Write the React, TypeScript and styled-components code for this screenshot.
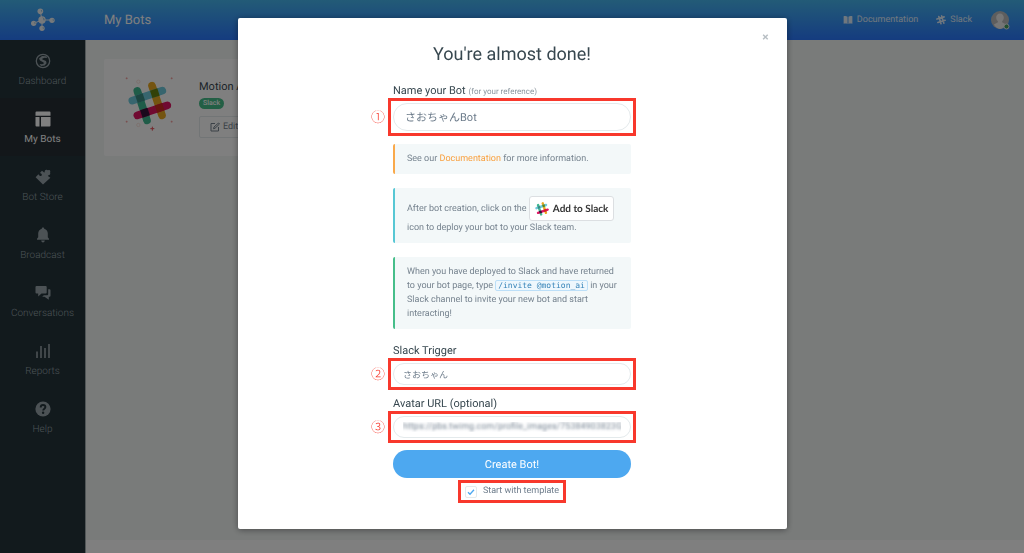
import React from "react";
import styled, { createGlobalStyle, css } from "styled-components";

const GlobalStyle = createGlobalStyle`
  *, *::before, *::after { box-sizing: border-box; }
  body {
    margin: 0;
    font-family: Roboto, "Noto Sans CJK JP", sans-serif;
    font-size: 9px;
    color: #6c7b8a;
    background: #f2f6f5;
    text-rendering: geometricPrecision;
  }
  button, input { font-family: inherit; text-rendering: inherit; }
`;

/* ---------- page shell ---------- */

const Shell = styled.div`
  min-height: 100vh;
  display: flex;
  flex-direction: column;
`;

const TopBar = styled.header`
  height: 40px;
  display: flex;
  align-items: center;
  padding-right: 14px;
  background: linear-gradient(#46b6ee, #2a78ff);
`;

const Brand = styled.a`
  width: 86px;
  display: flex;
  justify-content: center;
`;

const PageTitle = styled.h1`
  flex: 1;
  margin: 0;
  padding-left: 18px;
  font-size: 13px;
  font-weight: 400;
  color: #fff;
`;

const TopNav = styled.nav`
  display: flex;
  align-items: center;
  gap: 18px;
`;

const TopLink = styled.a`
  display: flex;
  align-items: center;
  gap: 4px;
  font-size: 9px;
  line-height: 14px;
  font-weight: 400;
  color: #fff;
  opacity: 0.85;
  text-decoration: none;
`;

const Body = styled.div`
  flex: 1;
  display: flex;
`;

const Sidebar = styled.nav`
  width: 86px;
  background: #24343b;
  border-right: 1px solid #a4aeb0;
`;

const SideLink = styled.a<{ $active?: boolean }>`
  height: 58px;
  display: flex;
  flex-direction: column;
  align-items: center;
  justify-content: center;
  gap: 6px;
  padding-top: 3px;
  font-size: 10px;
  line-height: 14px;
  font-weight: ${(p) => (p.$active ? 400 : 300)};
  color: ${(p) => (p.$active ? "#fff" : "#98a4aa")};
  background: ${(p) => (p.$active ? "#262e34" : "transparent")};
  text-decoration: none;
`;

const Content = styled.div`
  flex: 1;
  display: flex;
  flex-direction: column;
`;

const Main = styled.main`
  flex: 1;
  padding: 19px 18px;
`;

const Footer = styled.footer`
  height: 13px;
  background: #fff;
`;

const BotCard = styled.article`
  width: 100%;
  max-width: 280px;
  height: 97px;
  display: flex;
  gap: 26px;
  padding: 18px 21px;
  border-radius: 2px;
  background: #fff;
`;

const BotInfo = styled.div`
  display: flex;
  flex-direction: column;
  align-items: flex-start;
  padding-top: 3px;
`;

const BotName = styled.h2`
  margin: 0;
  font-size: 11px;
  line-height: 14px;
  font-weight: 400;
  color: #37474f;
`;

const Badge = styled.span`
  margin: 4px 0 7px;
  padding: 0 4px;
  border-radius: 6px;
  font-size: 7px;
  line-height: 11px;
  font-weight: 500;
  color: #fff;
  background: #46be8a;
`;

const EditButton = styled.button`
  height: 22px;
  width: 76px;
  display: flex;
  align-items: center;
  gap: 3px;
  padding: 0 10px;
  border: 1px solid #e4eaec;
  border-radius: 2px;
  background: #fff;
  color: #76838f;
  font-size: 9px;
`;

/* ---------- dialog ---------- */

const Backdrop = styled.div`
  position: fixed;
  inset: 0;
  padding: 18px 16px;
  overflow: auto;
  background: rgba(0, 0, 0, 0.5);
`;

const Dialog = styled.section`
  position: relative;
  width: 100%;
  max-width: 549px;
  margin: 0 auto;
  padding: 25px 16px 31px;
  border-radius: 2px;
  background: #fff;
  box-shadow: 0 1px 6px rgba(0, 0, 0, 0.4);
`;

const CloseButton = styled.button`
  position: absolute;
  top: 13px;
  right: 18px;
  padding: 0;
  border: 0;
  background: none;
  font-size: 12px;
  line-height: 12px;
  font-weight: 700;
  color: #b8bfc4;
`;

const DialogTitle = styled.h2`
  margin: 0 0 16px;
  text-align: center;
  font-size: 18px;
  line-height: 24px;
  font-weight: 400;
  color: #37474f;
`;

const Form = styled.form`
  max-width: 238px;
  margin: 0 auto;
`;

const Label = styled.label`
  display: block;
  margin-bottom: 4px;
  font-size: 11px;
  line-height: 16px;
  color: #37474f;
`;

const Hint = styled.small`
  font-size: 8px;
  line-height: 8px;
  font-weight: 400;
  color: #8b969f;
`;

const marked = css`
  outline: 3px solid #f8382c;
  outline-offset: 2px;
`;

const Field = styled.div<{ $gap: number }>`
  position: relative;
  margin-bottom: ${(p) => p.$gap}px;
  ${marked}
`;

const Step = styled.span`
  position: absolute;
  right: 100%;
  top: 50%;
  transform: translateY(-50%);
  margin-right: 8px;
  font-family: "Noto Sans CJK JP", sans-serif;
  font-size: 14px;
  line-height: 16px;
  font-weight: 300;
  color: #f8382c;
`;

const TextInput = styled.input<{ $large?: boolean; $obscured?: boolean }>`
  display: block;
  width: 100%;
  height: ${(p) => (p.$large ? 28 : 22)}px;
  padding: 0 ${(p) => (p.$large ? 11 : 9)}px;
  border: 1px solid #e4eaec;
  border-radius: 14px;
  outline: 0;
  background: #fff;
  font-size: ${(p) => (p.$large ? 11 : 9)}px;
  color: #6c7b8a;
  ${(p) =>
    p.$obscured &&
    css`
      color: transparent;
      text-shadow: 0 0 3px #6c7b8a;
    `}
`;

const Note = styled.p<{ $accent: string }>`
  margin: 0 0 14px;
  padding: 8px 12px;
  border-left: 2px solid ${(p) => p.$accent};
  border-radius: 2px;
  background: #f3f8f9;
  font-size: 9px;
  line-height: 14px;
  font-weight: 400;
  color: #76838f;
`;

const NoteLink = styled.a`
  color: #f9a03f;
  text-decoration: none;
`;

const Code = styled.code`
  padding: 0 2px;
  border: 1px solid #bcdff8;
  border-radius: 2px;
  background: #eef7fd;
  font-family: "DejaVu Sans Mono", monospace;
  font-size: 8px;
  line-height: 11px;
  white-space: nowrap;
  color: #3583b8;
`;

const AddToSlack = styled.button`
  height: 25px;
  display: inline-flex;
  align-items: center;
  gap: 4px;
  padding: 0 5px;
  border: 1px solid #dcdfe2;
  border-radius: 3px;
  background: #fff;
  vertical-align: middle;
  white-space: nowrap;
  font-family: Lato, sans-serif;
  font-size: 10px;
  font-weight: 700;
  color: #333;
`;

const SubmitButton = styled.button`
  display: block;
  width: 100%;
  height: 28px;
  border: 0;
  border-radius: 14px;
  background: #4da8f0;
  font-size: 11px;
  color: #fff;
`;

const TemplateRow = styled.div`
  display: flex;
  justify-content: center;
  margin-top: 7px;
`;

const TemplateOption = styled.label`
  display: flex;
  align-items: center;
  gap: 6px;
  padding: 0 2px;
  font-size: 9px;
  line-height: 13px;
  ${marked}
`;

const Checkbox = styled.input`
  appearance: none;
  width: 12px;
  height: 12px;
  margin: 0;
  border: 1px solid #e4eaec;
  border-radius: 2px;
  background: #fff;
  &:checked {
    background: center / 8px 8px no-repeat
      url("data:image/svg+xml,%3Csvg xmlns='http://www.w3.org/2000/svg' viewBox='0 0 8 8'%3E%3Cpath d='M1 4.2l2 2L7 1.8' fill='none' stroke='%234da8f0' stroke-width='1.3'/%3E%3C/svg%3E");
  }
`;

/* ---------- drawings ---------- */

const Molecule = () => (
  <svg width="24" height="24" viewBox="0 0 72 72" fill="#eef3f6" stroke="#eef3f6" aria-hidden="true">
    <path d="M33 36 28 10M33 36 63 36M33 36 8 46M33 36 33 61" strokeWidth="3" fill="none" />
    <g stroke="none">
      <circle cx="33" cy="36" r="11" />
      <circle cx="28" cy="10" r="8.5" />
      <circle cx="63" cy="37" r="8" />
      <circle cx="8" cy="46" r="8" />
      <circle cx="33" cy="61" r="8" />
    </g>
    <path d="M36 29a8 8 0 0 1 3 8M30 6a5 5 0 0 1 2 5M66 34a4 4 0 0 1 1 4M11 43a4 4 0 0 1 1 4M36 58a4 4 0 0 1 1 4" fill="none" stroke="#6fa9cf" strokeWidth="2.5" />
  </svg>
);

const HashMark = ({ size }: { size: number }) => (
  <svg width={size} height={size} viewBox="380 243 132 132" aria-hidden="true">
    <g fill="none" strokeWidth="23" strokeLinecap="round">
      <path d="M409 272 438 360" stroke="#3eb991" />
      <path d="M453 256 483 345" stroke="#e9a820" />
      <path d="M394 301 484 271" stroke="#6ecadc" />
      <path d="M409 345 499 315" stroke="#e01563" />
    </g>
    <g fill="none" strokeWidth="23">
      <path d="M406.500 297 428.500 289.500" stroke="#3a8c82" />
      <path d="M450.500 282 472.500 275" stroke="#65830f" />
      <path d="M421 341 443 333.500" stroke="#361238" />
      <path d="M465 326.500 487 319" stroke="#cf2a20" />
    </g>
  </svg>
);

const BotPicture = () => (
  <svg width="48" height="54" viewBox="372 230 144 162" aria-hidden="true">
    <svg x="380" y="243" width="132" height="132" viewBox="0 0 132 132">
      <HashMark size={132} />
    </svg>
    <g stroke="#f08a8a" strokeWidth="2" fill="none">
      <path d="M374 234h6M377 231v6M509 234h6M512 231v6M374 364h6M377 361v6M509 364h6M512 361v6" />
      <path d="M448 385h12M454 379v12" stroke="#e8505a" strokeWidth="3" />
      <circle cx="412" cy="244" r="5" stroke="#f6d5cd" />
      <circle cx="412" cy="374" r="5" stroke="#f6d5cd" />
    </g>
  </svg>
);

const Icon = ({ children, size = 16 }: { children: React.ReactNode; size?: number }) => (
  <svg width={size} height={size} viewBox="0 0 16 16" fill="currentColor" aria-hidden="true">
    {children}
  </svg>
);

const GlobeIcon = () => (
  <Icon>
    <circle cx="8" cy="8" r="6.700" fill="none" stroke="currentColor" strokeWidth="1.300" />
    <path d="M4 5.500 7 3l4.500.2.500 1.800-2.500-.3-2.300 1 .2.900 3.600 1.400.6 2.200-2 2.300-3.600.6-1.500-2 2.600.1 1.800-.8-.3-1L5 7.500z" />
  </Icon>
);
const LayoutIcon = () => (
  <Icon>
    <path d="M1.500.5h13a1 1 0 0 1 1 1v3.200H.5V1.500a1 1 0 0 1 1-1zM.5 6h4v9.500h-3a1 1 0 0 1-1-1zM6 6h9.500v8.500a1 1 0 0 1-1 1H6z" />
  </Icon>
);
const PuzzleIcon = () => (
  <Icon>
    <path d="M8 15.500.6 8.300l2.600-2.700c.5-.4 1 0 1.100.6.300 1.100 1.700 1.200 2.300.4.600-.9.200-1.900-.8-2.200-.6-.2-.7-.7-.3-1.100L7 1.800l1.800 1.500c.5.400 1 .1.900-.5C9.500 1.300 11 .3 12.200 1c.6.300.9 0 1.400-.1.800-.1 1.600.4 1.700 1.300.1.600-.3 1-.2 1.600.6 1.200-.2 2.300-1.500 2.400-.7.100-.8.500-.4 1l2.200 1.500z" />
  </Icon>
);
const BellIcon = () => (
  <Icon>
    <path d="M8 .5c.8 0 1.200.5 1.200 1.200 2.300.6 3.600 2.400 3.600 4.900v3.600l1.200 1.600v1H2v-1l1.200-1.600V6.600c0-2.500 1.300-4.300 3.600-4.900C6.800 1 7.200.5 8 .5zM6.200 13.600h3.600c0 1.100-.8 1.900-1.800 1.900s-1.800-.8-1.800-1.900z" />
  </Icon>
);
const ChatIcon = () => (
  <Icon>
    <path d="M1.500 1h9.200a1 1 0 0 1 1 1v5.600a1 1 0 0 1-1 1H6.500L3.200 11.500V8.600H1.500a1 1 0 0 1-1-1V2a1 1 0 0 1 1-1z" />
    <path d="M13.200 4.200h1.300a1 1 0 0 1 1 1v5.600a1 1 0 0 1-1 1h-.7v3L9.500 11.800H7.200l1.600-1.600h3.400a1 1 0 0 0 1-1z" />
  </Icon>
);
const BarsIcon = () => (
  <Icon>
    <path d="M1.200 8.500h1.600v6.500H1.200zM5.200 3h1.600v12H5.200zM9.200 5h1.600v10H9.200zM13.200 1h1.600v14h-1.600z" />
  </Icon>
);
const HelpIcon = () => (
  <Icon>
    <circle cx="8" cy="8" r="7.600" />
    <path d="M5.700 6.400C5.700 4.900 6.600 4 8 4s2.400.9 2.400 2.100C10.400 7.700 8.200 7.700 8.200 9.600" fill="none" stroke="#24343b" strokeWidth="1.900" />
    <circle cx="8.100" cy="11.700" r="1.200" fill="#24343b" />
  </Icon>
);
const BookIcon = () => (
  <Icon size={10}>
    <path d="M1 2c2.400-.6 4.600-.3 6.300.6v11.600C5.600 13.400 3.400 13.200 1 13.800zM15 2c-2.400-.6-4.600-.3-6.300.6v11.600c1.700-.8 3.900-1 6.300-.4z" />
  </Icon>
);
const HashIcon = () => (
  <Icon size={10}>
    <path d="M4.500 2.500 8 14M9 1.500l3.500 11.500M1.500 6.500 13 3M3 12l11.500-3.500" fill="none" stroke="currentColor" strokeWidth="2.600" strokeLinecap="round" />
  </Icon>
);
const EditIcon = () => (
  <svg width="10" height="10" viewBox="0 0 20 20" fill="none" stroke="currentColor" strokeWidth="2" aria-hidden="true">
    <path d="M10 3H2v15h15v-8" />
    <path d="M7 13.500 8 10l9-8 2 2-9 8.500z" />
  </svg>
);
const Avatar = () => (
  <svg width="20" height="20" viewBox="0 0 20 20" role="img" aria-label="Account">
    <circle cx="10" cy="10" r="9" fill="#bdbdbd" />
    <path d="M10 3.500c2.300 0 3.800 1.700 3.800 4 0 1.700-.7 3-1.700 3.800v1l4 2.200A9 9 0 0 1 10 19a9 9 0 0 1-6.100-4.500l4-2.200v-1C6.900 10.500 6.200 9.200 6.200 7.500c0-2.300 1.500-4 3.800-4z" fill="#ececec" />
    <circle cx="16.500" cy="16.500" r="2.500" fill="#46a35e" stroke="#e8eef0" />
  </svg>
);

const sections = [
  { name: "Dashboard", Glyph: GlobeIcon },
  { name: "My Bots", Glyph: LayoutIcon, active: true },
  { name: "Bot Store", Glyph: PuzzleIcon },
  { name: "Broadcast", Glyph: BellIcon },
  { name: "Conversations", Glyph: ChatIcon },
  { name: "Reports", Glyph: BarsIcon },
  { name: "Help", Glyph: HelpIcon },
];

export default function App() {
  return (
    <>
      <GlobalStyle />
      <Shell>
        <TopBar>
          <Brand href="#" aria-label="Home">
            <Molecule />
          </Brand>
          <PageTitle>My Bots</PageTitle>
          <TopNav>
            <TopLink href="#"><BookIcon />Documentation</TopLink>
            <TopLink href="#"><HashIcon />Slack</TopLink>
            <Avatar />
          </TopNav>
        </TopBar>
        <Body>
          <Sidebar>
            {sections.map(({ name, Glyph, active }) => (
              <SideLink key={name} href="#" $active={active}>
                <Glyph />
                {name}
              </SideLink>
            ))}
          </Sidebar>
          <Content>
            <Main>
              <BotCard>
                <BotPicture />
                <BotInfo>
                  <BotName>Motion AI</BotName>
                  <Badge>Slack</Badge>
                  <EditButton type="button"><EditIcon />Edit</EditButton>
                </BotInfo>
              </BotCard>
            </Main>
            <Footer />
          </Content>
        </Body>
      </Shell>

      <Backdrop>
        <Dialog role="dialog" aria-modal="true" aria-labelledby="dialog-title">
          <CloseButton type="button" aria-label="Close">×</CloseButton>
          <DialogTitle id="dialog-title">You're almost done!</DialogTitle>
          <Form onSubmit={(e) => e.preventDefault()}>
            <Label htmlFor="bot-name">
              Name your Bot <Hint>(for your reference)</Hint>
            </Label>
            <Field $gap={13}>
              <Step>①</Step>
              <TextInput id="bot-name" $large defaultValue="さおちゃんBot" />
            </Field>

            <Note $accent="#f9a94b">
              See our <NoteLink href="#">Documentation</NoteLink> for more information.
            </Note>
            <Note $accent="#57c7d4">
              After bot creation, click on the{" "}
              <AddToSlack type="button">
                <HashMark size={14} />
                Add to Slack
              </AddToSlack>{" "}
              icon to deploy your bot to your Slack team.
            </Note>
            <Note $accent="#46be8a">
              When you have deployed to Slack and have returned to your bot page, type{" "}
              <Code>/invite @motion_ai</Code> in your Slack channel to invite your new bot and
              start interacting!
            </Note>

            <Label htmlFor="trigger">Slack Trigger</Label>
            <Field $gap={11}>
              <Step>②</Step>
              <TextInput id="trigger" defaultValue="さおちゃん" />
            </Field>

            <Label htmlFor="avatar">Avatar URL (optional)</Label>
            <Field $gap={12}>
              <Step>③</Step>
              <TextInput
                id="avatar"
                $obscured
                defaultValue="https://pbs.twimg.com/profile_images/75384903823GZ6Z"
              />
            </Field>

            <SubmitButton type="submit">Create Bot!</SubmitButton>
            <TemplateRow>
              <TemplateOption>
                <Checkbox type="checkbox" defaultChecked />
                Start with template
              </TemplateOption>
            </TemplateRow>
          </Form>
        </Dialog>
      </Backdrop>
    </>
  );
}
